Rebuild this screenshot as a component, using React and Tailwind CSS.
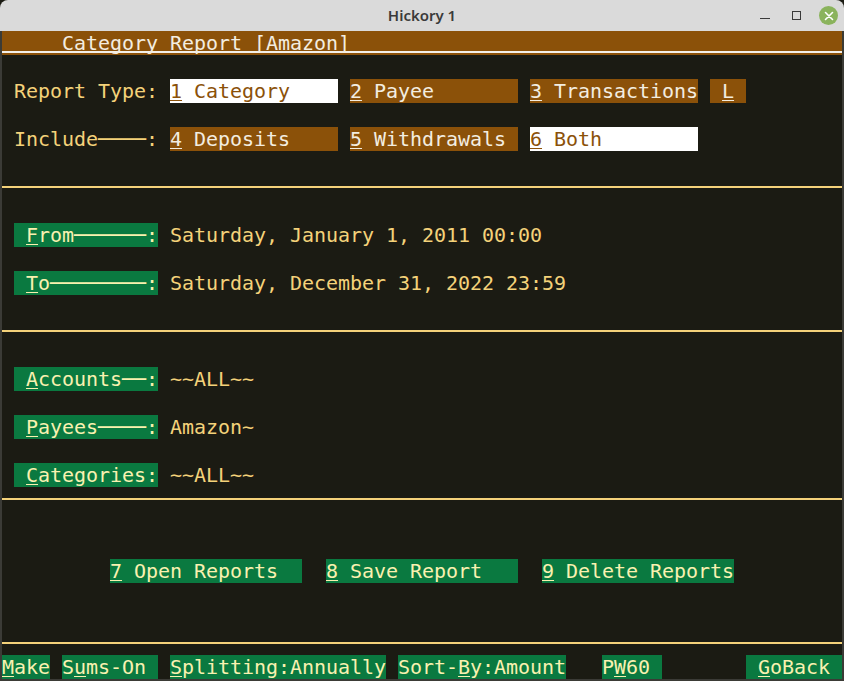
import React from "react";

/* palette */
const YEL = "text-[#f4d27a]";
const mono = "font-['DejaVu_Sans_Mono',monospace] text-[20px] leading-[24px] tracking-[-0.04px]";

const Hot = ({ children }) => (
  <span className="underline decoration-1 underline-offset-[2px]">{children}</span>
);

const Row = ({ className = "", children }) => (
  <div className={`h-[24px] flex items-center whitespace-pre ${className}`}>{children}</div>
);

const Blank = () => <div className="h-[24px]" />;

const Rule = () => (
  <div className="h-[24px] flex flex-col">
    <div className="h-[11px]" />
    <div className="h-[2px] bg-[#f4d27a]" />
  </div>
);

/* box variants */
const brown = "bg-[#8b5109] text-[#f3ede0]";
const white = "bg-white text-[#8b5109]";
const green = "bg-[#0a7940] text-[#f9f1b0]";

function Field({ label, value }) {
  return (
    <Row className="pl-[12px]">
      <span className={`w-[144px] ${green}`}>{label}</span>
      <span className={`ml-[12px] ${YEL}`}>{value}</span>
    </Row>
  );
}

export default function App() {
  return (
    <div className="w-[844px] h-[681px] bg-[#1b1b13] overflow-hidden">
      {/* window title bar */}
      <div className="h-[31px] bg-[#dadada] rounded-t-[8px] flex items-center relative">
        <div className="flex-1 text-center font-['Noto_Sans',sans-serif] text-[15px] font-semibold text-[#3a3a3a]">
          Hickory 1
        </div>
        <div className="absolute right-[6px] top-0 h-[31px] flex items-center gap-[18px] text-[#3a3a3a]">
          <span className="w-[10px] h-[1.5px] bg-[#3a3a3a] mt-[6px]" />
          <span className="w-[9px] h-[9px] border border-[#3a3a3a] ml-[4px]" />
          <span className="w-[19px] h-[19px] rounded-full bg-[#8ab35c] flex items-center justify-center">
            <svg width="10" height="10" viewBox="0 0 10 10">
              <path d="M1.5 1.5 L8.5 8.5 M8.5 1.5 L1.5 8.5" stroke="#fff" strokeWidth="1.6" strokeLinecap="round" />
            </svg>
          </span>
        </div>
      </div>

      {/* terminal */}
      <div className={`h-[650px] border-x-2 border-b-2 border-[#3b3b36] ${mono}`}>
        {/* title row */}
        <div className="h-[24px] bg-[#8b5109] flex flex-col">
          <div className="h-[22px] border-b-2 border-[#f3f0ea] pl-[60px] text-[#f3ede0] whitespace-pre">
            Category Report [Amazon]
          </div>
        </div>
        <Blank />
        <Row className="pl-[12px]">
          <span className={`w-[156px] ${YEL}`}>Report Type:</span>
          <span className={`w-[168px] ${white}`}><Hot>1</Hot> Category</span>
          <span className={`w-[168px] ml-[12px] ${brown}`}><Hot>2</Hot> Payee</span>
          <span className={`w-[168px] ml-[12px] ${brown}`}><Hot>3</Hot> Transactions</span>
          <span className={`w-[36px] ml-[12px] ${brown}`}> <Hot>L</Hot> </span>
        </Row>
        <Blank />
        <Row className="pl-[12px]">
          <span className={`w-[156px] ${YEL}`}>Include────:</span>
          <span className={`w-[168px] ${brown}`}><Hot>4</Hot> Deposits</span>
          <span className={`w-[168px] ml-[12px] ${brown}`}><Hot>5</Hot> Withdrawals</span>
          <span className={`w-[168px] ml-[12px] ${white}`}><Hot>6</Hot> Both</span>
        </Row>
        <Blank />
        <Rule />
        <Blank />
        <Field label={<> <Hot>F</Hot>rom──────:</>} value="Saturday, January 1, 2011 00:00" />
        <Blank />
        <Field label={<> <Hot>T</Hot>o────────:</>} value="Saturday, December 31, 2022 23:59" />
        <Blank />
        <Rule />
        <Blank />
        <Field label={<> <Hot>A</Hot>ccounts──:</>} value="~~ALL~~" />
        <Blank />
        <Field label={<> <Hot>P</Hot>ayees────:</>} value="Amazon~" />
        <Blank />
        <Field label={<> <Hot>C</Hot>ategories:</>} value="~~ALL~~" />
        <Rule />
        <Blank />
        <Blank />
        <Row className="pl-[108px]">
          <span className={`w-[192px] ${green}`}><Hot>7</Hot> Open Reports</span>
          <span className={`w-[192px] ml-[24px] ${green}`}><Hot>8</Hot> Save Report</span>
          <span className={`w-[192px] ml-[24px] ${green}`}><Hot>9</Hot> Delete Reports</span>
        </Row>
        <Blank />
        <Blank />
        <Rule />
        <Row>
          <span className={`w-[48px] ${green}`}><Hot>M</Hot>ake</span>
          <span className={`w-[96px] ml-[12px] ${green}`}>S<Hot>u</Hot>ms-On</span>
          <span className={`w-[216px] ml-[12px] ${green}`}><Hot>S</Hot>plitting:Annually</span>
          <span className={`w-[168px] ml-[12px] ${green}`}>Sort-<Hot>B</Hot>y:Amount</span>
          <span className={`w-[60px] ml-[36px] ${green}`}>P<Hot>W</Hot>60</span>
          <span className={`w-[96px] ml-[84px] ${green}`}> <Hot>G</Hot>oBack</span>
        </Row>
      </div>
    </div>
  );
}
